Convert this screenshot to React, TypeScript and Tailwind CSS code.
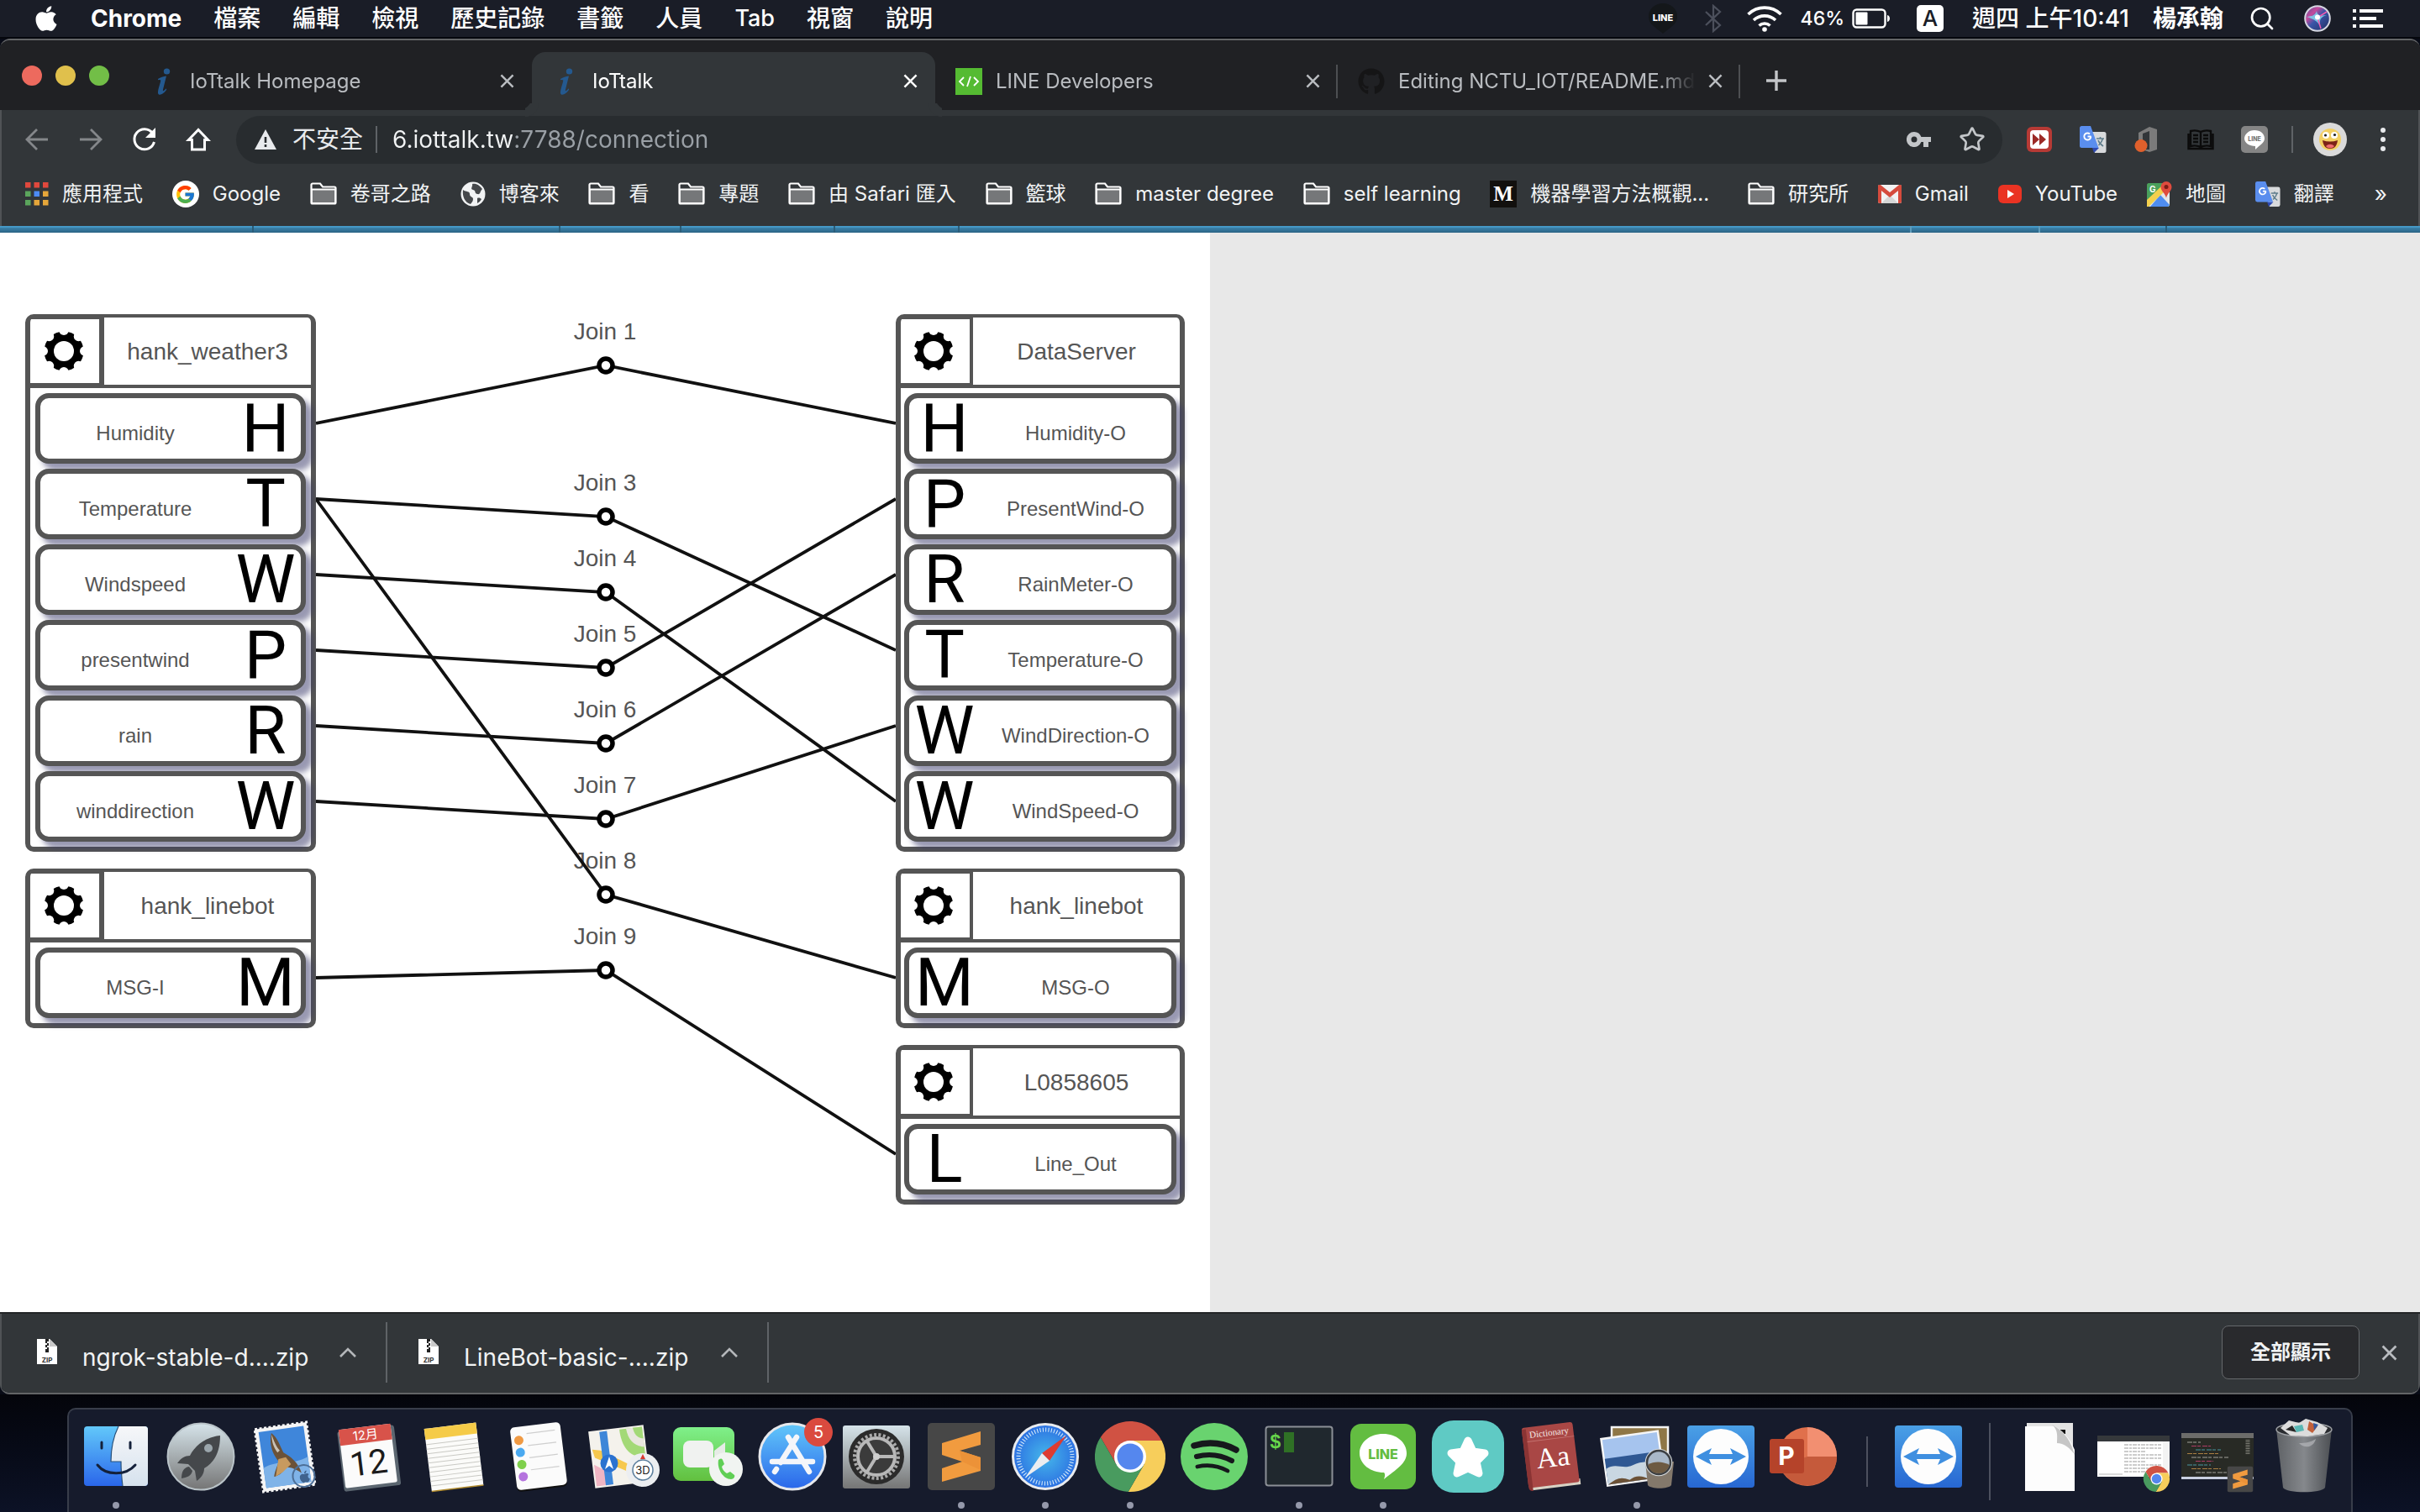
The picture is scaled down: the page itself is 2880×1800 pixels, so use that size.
import React from "react";
import { FaApple, FaGithub } from "react-icons/fa";
import { FcGoogle } from "react-icons/fc";
import { Search, Star } from "lucide-react";

/* ---------------------------------------------------------------- menu bar */

const MENUS = ["檔案", "編輯", "檢視", "歷史記錄", "書籤", "人員", "Tab", "視窗", "說明"];

function MenuBar() {
  return (
    <header className="flex h-[46px] items-center justify-between bg-[#1a1d27] pb-[2px] pl-[40px] pr-[44px] text-[28px] leading-[44px] text-white shadow-[inset_0_-2px_#05070d]">
      <nav className="flex items-center gap-[38px]">
        <button aria-label="Apple" className="w-[30px]">
          <FaApple className="h-[34px] w-[30px]" />
        </button>
        <button className="text-[28px] font-bold">Chrome</button>
        {MENUS.map((m) => (
          <button key={m} className={m === "Tab" ? "text-[27px] font-medium" : "font-medium"}>
            {m}
          </button>
        ))}
      </nav>
      <div className="flex items-center">
        <svg viewBox="0 0 40 44" className="mr-[28px] h-[44px] w-[40px]">
          <path d="M20 4a17 15 0 0 1 17 16c0 9-9 13-17 20-8-7-17-11-17-20A17 15 0 0 1 20 4z" fill="#14171a" />
          <text x="20" y="25" textAnchor="middle" fontSize="11" fontWeight="800" fill="#fff">LINE</text>
        </svg>
        <svg viewBox="0 0 24 34" className="mr-[28px] h-[34px] w-[24px]" fill="none" stroke="#4c505c" strokeWidth="2.200">
          <path d="M3 9l17 16-8 7V2l8 7L3 25" />
        </svg>
        <svg viewBox="0 0 42 32" className="mr-[22px] h-[32px] w-[42px]" fill="none" stroke="#fff" strokeWidth="3.600">
          <path d="M1.500 11a28 28 0 0 1 39 0M8 18a19 19 0 0 1 26 0M14.500 24.500a9.500 9.500 0 0 1 13 0" />
          <circle cx="21" cy="29" r="2.800" fill="#fff" stroke="none" />
        </svg>
        <span className="mr-[9px] text-[23px] font-medium">46%</span>
        <svg viewBox="0 0 46 24" className="mr-[31px] h-[24px] w-[46px]">
          <rect x="1.500" y="1.500" width="38" height="21" rx="4" fill="none" stroke="#fff" strokeWidth="2.400" />
          <rect x="4.500" y="4.500" width="14" height="15" rx="1" fill="#fff" />
          <path d="M42 8c4 1 4 7 0 8z" fill="#fff" />
        </svg>
        <span className="mr-[34px] flex h-[32px] w-[32px] items-center justify-center rounded-[5px] bg-white text-[26px] font-medium text-[#1a1d27]">
          A
        </span>
        <span className="mr-[28px] font-medium">週四 上午10:41</span>
        <span className="mr-[30px] font-bold">楊承翰</span>
        <button aria-label="Spotlight" className="mr-[34px]">
          <Search className="h-[32px] w-[32px]" strokeWidth={2} />
        </button>
        <button aria-label="Siri" className="mr-[26px]">
          <svg viewBox="0 0 32 32" className="h-[32px] w-[32px]">
            <defs>
              <linearGradient id="siri" x1="0" y1="0" x2="1" y2="1">
                <stop offset="0" stopColor="#4a4f9c" />
                <stop offset=".3" stopColor="#c54a9c" />
                <stop offset=".5" stopColor="#3a55a8" />
                <stop offset="1" stopColor="#1f2c5e" />
              </linearGradient>
            </defs>
            <circle cx="16" cy="16" r="14.800" fill="url(#siri)" stroke="#d5d7e2" strokeWidth="2" />
            <path d="M3 14c6-1 10-1 12-7 1 6 4 6 12 5-7 2-9 5-8 13-3-6-7-8-16-11z" fill="#7fd6ee" opacity=".85" />
            <path d="M16 15L27 8M16 15l4 13" stroke="#f05ab0" strokeWidth="1.500" />
            <circle cx="16" cy="14.500" r="3" fill="#fff" />
          </svg>
        </button>
        <svg viewBox="0 0 36 22" className="h-[22px] w-[36px]" fill="#fff">
          <path d="M0 0h4v4H0zM8 0h28v4H8zM0 9h4v4H0zM8 9h20v4H8zM0 18h4v4H0zM8 18h28v4H8z" />
        </svg>
      </div>
    </header>
  );
}

/* -------------------------------------------------------------------- tabs */

const Info = () => (
  <svg viewBox="0 0 32 32" className="h-[32px] w-[32px] shrink-0">
    <ellipse cx="20.500" cy="4" rx="3.700" ry="3.500" fill="#24598f" />
    <path d="M10 13c3-2 6-3 10-3.500l-4 16c-.5 2.500.5 2.500 3.500-1 .8.300.8 1 .3 1.700-2.500 4-9 8-9.800 3.500-.3-4 3-12 3.300-15-.5-1-2-.6-3.300-.4z" fill="#24598f" />
  </svg>
);

const LineDev = () => (
  <svg viewBox="0 0 32 32" className="h-[32px] w-[32px] shrink-0">
    <rect width="32" height="32" fill="#55bb32" />
    <path d="M10 11l-5 5 5 5M22 11l5 5-5 5M18 10l-4 12" fill="none" stroke="#fff" strokeWidth="1.800" />
  </svg>
);

const CloseIcon = ({ className }: { className: string }) => (
  <svg viewBox="0 0 18 18" className={className} fill="none" stroke="currentColor" strokeWidth="2.600">
    <path d="M1.500 1.500l15 15M16.500 1.500l-15 15" />
  </svg>
);

const TABS = [
  { title: "IoTtalk Homepage", icon: <Info />, active: false, sep: false },
  { title: "IoTtalk", icon: <Info />, active: true, sep: false },
  { title: "LINE Developers", icon: <LineDev />, active: false, sep: true },
  {
    title: "Editing NCTU_IOT/README.md",
    icon: <FaGithub className="h-[32px] w-[32px] shrink-0 text-[#151516]" />,
    active: false,
    sep: true,
  },
];

function TabStrip() {
  return (
    <div className="flex h-[83px] items-end bg-[#202124]">
      <div className="flex h-[83px] w-[154px] items-center gap-[16px] pl-[26px]">
        <button aria-label="Close window" className="h-[24px] w-[24px] rounded-full bg-[#ed6a5e]" />
        <button aria-label="Minimize" className="h-[24px] w-[24px] rounded-full bg-[#e0c04c]" />
        <button aria-label="Zoom" className="h-[24px] w-[24px] rounded-full bg-[#72be47]" />
      </div>
      <div role="tablist" className="flex">
        {TABS.map((t) => (
          <div
            key={t.title}
            className={
              t.active
                ? "relative flex h-[69px] w-[480px] items-center rounded-t-[16px] bg-[#323639] pl-[24px] pr-[14px] text-white before:absolute before:-left-[16px] before:bottom-0 before:h-[16px] before:w-[16px] before:rounded-br-[16px] before:shadow-[8px_8px_0_0_#323639] after:absolute after:-right-[16px] after:bottom-0 after:h-[16px] after:w-[16px] after:rounded-bl-[16px] after:shadow-[-8px_8px_0_0_#323639]"
                : "relative flex h-[69px] w-[479px] items-center pl-[24px] pr-[14px] text-[#b9bcc0]"
            }
          >
            {t.icon}
            <button
              role="tab"
              aria-selected={t.active}
              className="ml-[16px] flex-1 whitespace-nowrap text-left text-[24px] leading-[36px] [mask-image:linear-gradient(to_right,#000_86%,transparent_98%)]"
            >
              {t.title}
            </button>
            <button aria-label={`Close ${t.title}`} className="flex h-[32px] w-[32px] shrink-0 items-center justify-center">
              <CloseIcon className="h-[17px] w-[17px]" />
            </button>
            {t.sep && <span className="absolute right-0 top-[15px] h-[40px] w-[2px] bg-[#4d4f52]" />}
          </div>
        ))}
      </div>
      <button aria-label="New tab" className="mb-[23px] ml-[31px] text-[#c3c5c8]">
        <svg viewBox="0 0 24 24" className="h-[24px] w-[24px]" stroke="currentColor" strokeWidth="3.400">
          <path d="M12 0v24M0 12h24" />
        </svg>
      </button>
    </div>
  );
}

/* ----------------------------------------------------------------- toolbar */

const Translate = ({ className }: { className: string }) => (
  <svg viewBox="0 0 32 32" className={className}>
    <path d="M11 7h18a2.500 2.500 0 0 1 2.500 2.500v20A2.500 2.500 0 0 1 29 32H18z" fill="#d8dadc" />
    <path d="M17 32l6-6H15z" fill="#2f49b0" />
    <path d="M2.500 0H13l9.500 26h-20A2.500 2.500 0 0 1 0 23.500v-21A2.500 2.500 0 0 1 2.500 0z" fill="#5a8eee" />
    <path d="M13.500 12.500H9.500M13.300 12.500a4 4 0 1 1-1.300-3" fill="none" stroke="#fff" strokeWidth="1.900" />
    <path d="M20 15h9M24.500 13v2M27.500 15c-1 4-3 6-5 8M22 17c1 3 3 5 6 7" fill="none" stroke="#5f7d8c" strokeWidth="1.600" />
  </svg>
);

function Toolbar() {
  return (
    <div className="flex h-[70px] items-center bg-[#323639] pl-[28px] pr-[34px] shadow-[inset_2px_0_#505356,inset_-2px_0_#505356]">
      <div className="flex w-[253px] items-center gap-[32px]">
        <button aria-label="Back" className="text-[#84878a]">
          <svg viewBox="0 0 32 32" className="h-[32px] w-[32px]" fill="none" stroke="currentColor" strokeWidth="2.800">
            <path d="M29 16H4M16 4L4 16l12 12" />
          </svg>
        </button>
        <button aria-label="Forward" className="text-[#84878a]">
          <svg viewBox="0 0 32 32" className="h-[32px] w-[32px]" fill="none" stroke="currentColor" strokeWidth="2.800">
            <path d="M3 16h25M16 4l12 12-12 12" />
          </svg>
        </button>
        <button aria-label="Reload" className="text-white">
          <svg viewBox="0 0 32 32" className="h-[32px] w-[32px]">
            <path d="M25.500 8.500A12 12 0 1 0 27.500 19" fill="none" stroke="currentColor" strokeWidth="3" />
            <path d="M29 2v12H17z" fill="currentColor" />
          </svg>
        </button>
        <button aria-label="Home" className="text-white">
          <svg viewBox="0 0 32 32" className="h-[32px] w-[32px]" fill="none" stroke="currentColor" strokeWidth="3">
            <path d="M16 4.500L4.500 16.500H8.500V28h15V16.500h4z" />
          </svg>
        </button>
      </div>
      <div className="flex h-[57px] flex-1 items-center rounded-full bg-[#282c2f] pl-[22px] pr-[20px] text-[26px]">
        <svg viewBox="0 0 26 24" className="h-[24px] w-[26px]">
          <path d="M13 0l13 24H0z" fill="#e8eaed" />
          <path d="M11.700 9h2.600v7h-2.600zM11.700 18h2.600v3h-2.600z" fill="#282c2f" />
        </svg>
        <button className="ml-[19px] text-[28px] leading-[40px] text-[#e8eaed]">不安全</button>
        <span className="ml-[15px] h-[32px] w-[2px] bg-[#5f6367]" />
        <input
          aria-label="Address"
          defaultValue="6.iottalk.tw:7788/connection"
          className="ml-[18px] h-[44px] flex-1 bg-linear-to-r from-[#f1f3f4] from-[146px] to-[#9aa0a6] to-[146px] bg-clip-text text-[28px] text-transparent outline-none"
        />
        <button aria-label="Passwords">
          <svg viewBox="0 0 30 18" className="h-[18px] w-[30px]" fill="#c3c6c9">
            <path fillRule="evenodd" d="M9 0a9 9 0 0 1 8.400 6H29v6h-3v6h-6v-6h-2.600A9 9 0 1 1 9 0zm0 5.500a3.500 3.500 0 1 0 0 7 3.500 3.500 0 0 0 0-7z" />
          </svg>
        </button>
        <button aria-label="Bookmark this page" className="ml-[32px]">
          <Star className="h-[32px] w-[32px] text-[#c3c6c9]" strokeWidth={2} />
        </button>
      </div>
      <div className="ml-[28px] flex items-center gap-[32px]">
        <button aria-label="Fast forward extension">
          <svg viewBox="0 0 32 32" className="h-[32px] w-[32px]">
            <rect x="1" y="1" width="30" height="30" rx="6" fill="#b73a35" />
            <rect x="5" y="5" width="22" height="22" rx="4" fill="#fff" />
            <path d="M8 9l8 7-8 7zM16 9l8 7-8 7z" fill="#9c2a26" />
          </svg>
        </button>
        <button aria-label="Translate extension">
          <Translate className="h-[32px] w-[32px]" />
        </button>
        <button aria-label="Office extension">
          <svg viewBox="0 0 32 32" className="h-[32px] w-[32px]">
            <path d="M6 8L19 1l9 3v24l-9 3-9-3 9 0V6l-8 3v9H6z" fill="#7b7b7b" />
            <circle cx="9" cy="23.500" r="7.500" fill="#e0602c" />
          </svg>
        </button>
        <button aria-label="Reader extension">
          <svg viewBox="0 0 32 32" className="h-[32px] w-[32px]" fill="none" stroke="#0b0b0b" strokeWidth="2.400">
            <path d="M16 7c-4-2-8-2-12-1v18c4-1 8-1 12 1 4-2 8-2 12-1V6c-4-1-8-1-12 1zv18M1.500 9v18h29V9M7 11h6M7 15h6M7 19h6M19 11h6M19 15h6M19 19h6" />
          </svg>
        </button>
        <button aria-label="LINE extension">
          <svg viewBox="0 0 32 32" className="h-[32px] w-[32px]">
            <rect width="32" height="32" rx="5" fill="#858585" />
            <path d="M16 5c7 0 12 4 12 10 0 5-6 8-11 13v-4C10 24 4 20 4 15S9 5 16 5z" fill="#fff" />
            <text x="16" y="17.500" textAnchor="middle" fontSize="7" fontWeight="800" fill="#777">LINE</text>
          </svg>
        </button>
      </div>
      <span className="ml-[28px] h-[32px] w-[2px] bg-[#5f6367]" />
      <button aria-label="Profile" className="ml-[24px]">
        <svg viewBox="0 0 40 40" className="h-[40px] w-[40px]">
          <circle cx="20" cy="20" r="20" fill="#dadada" />
          <circle cx="20" cy="20" r="13" fill="#f3cf62" />
          <circle cx="15" cy="15" r="4" fill="#fff" />
          <circle cx="25" cy="15" r="4" fill="#fff" />
          <circle cx="14.500" cy="15" r="1.600" fill="#222" />
          <circle cx="25.500" cy="14.500" r="1.600" fill="#222" />
          <path d="M11 21c6 2 12 2 18 0-1 7-4 10-9 10s-8-3-9-10z" fill="#7c2318" />
          <path d="M15 28c3-3 7-3 10 0-2 3-8 3-10 0z" fill="#ee6a6f" />
        </svg>
      </button>
      <button aria-label="More" className="ml-[40px] flex flex-col gap-[5px] pr-[7px]">
        <span className="h-[6px] w-[6px] rounded-full bg-[#e8eaed]" />
        <span className="h-[6px] w-[6px] rounded-full bg-[#e8eaed]" />
        <span className="h-[6px] w-[6px] rounded-full bg-[#e8eaed]" />
      </button>
    </div>
  );
}

/* --------------------------------------------------------------- bookmarks */

const Apps = () => (
  <svg viewBox="0 0 28 28" className="h-[28px] w-[28px]">
    {["#e0483d", "#e0483d", "#e0483d", "#5ba55c", "#4c8bf5", "#e5a63a", "#5ba55c", "#e5a63a", "#e5a63a"].map((c, i) => (
      <rect key={i} x={(i % 3) * 10.500} y={Math.floor(i / 3) * 10.500} width="6.500" height="6.500" fill={c} />
    ))}
  </svg>
);

const Folder = () => (
  <svg viewBox="0 0 32 28" className="h-[28px] w-[32px]">
    <path d="M1.500 24V3A1.500 1.500 0 0 1 3 1.500h9l3 4h14A1.500 1.500 0 0 1 30.500 7v17A1.500 1.500 0 0 1 29 25.500H3A1.500 1.500 0 0 1 1.500 24z" fill="#323639" stroke="#fff" strokeWidth="2.200" />
    <path d="M2 8.500h28V25H2z" fill="#757779" stroke="#fff" strokeWidth="1.800" />
  </svg>
);

const Globe = () => (
  <svg viewBox="0 0 30 30" className="h-[30px] w-[30px]">
    <circle cx="15" cy="15" r="14.500" fill="#f1f3f4" />
    <path d="M3 10c4 3 8 1 8 5s4 3 4 6-2 4-3 6C5 25 2 18 3 10zM14 3c5-1 9 2 12 6-3 3-2 7-6 6s-1-4-5-5 0-4-1-7zM20 20c2-1 4 0 5 1-1 2-3 4-5 5z" fill="#45484b" />
  </svg>
);

const Medium = () => (
  <svg viewBox="0 0 32 32" className="h-[32px] w-[32px]">
    <rect width="32" height="32" fill="#12100e" />
    <text x="16" y="24" textAnchor="middle" fontSize="25" fontWeight="700" fontFamily="Liberation Serif" fill="#fff">M</text>
  </svg>
);

const Gmail = () => (
  <svg viewBox="0 0 28 22" className="h-[22px] w-[28px]">
    <rect width="28" height="22" rx="2" fill="#f2f2f2" />
    <path d="M4 22l10-10 10 10z" fill="#d6d6d6" />
    <path d="M0 2v18a2 2 0 0 0 2 2h2V7l10 8L24 7v15h2a2 2 0 0 0 2-2V2a2 2 0 0 0-3.500-1.500L14 9 3.500.5A2 2 0 0 0 0 2z" fill="#d54b3d" />
  </svg>
);

const YouTube = () => (
  <svg viewBox="0 0 28 22" className="h-[22px] w-[28px]">
    <rect width="28" height="22" rx="6" fill="#ea3323" />
    <path d="M11 6l8 5-8 5z" fill="#fff" />
  </svg>
);

const GMaps = () => (
  <svg viewBox="0 0 30 30" className="h-[30px] w-[30px]">
    <rect x="0" y="2" width="27" height="28" rx="3" fill="#4aa05c" />
    <path d="M0 27L27 4v23a3 3 0 0 1-3 3H3z" fill="#e3e5e7" />
    <path d="M4 30L16 16l11 12-2 2z" fill="#4f8df0" />
    <path d="M0 22L18 5l5 5L2 30H0z" fill="#f4d04d" />
    <path d="M0 5a3 3 0 0 1 3-3h17L0 20z" fill="#4aa05c" />
    <text x="3" y="13" fontSize="10" fontWeight="700" fill="#fff">G</text>
    <path d="M23 0a6.500 6.500 0 0 1 6.500 6.500c0 5-5 7-6.500 13-1.500-6-6.500-8-6.500-13A6.500 6.500 0 0 1 23 0z" fill="#df4b3e" />
    <circle cx="23" cy="6.500" r="2.500" fill="#7c1d17" />
  </svg>
);

const BOOKMARKS: { label: string; icon: React.ReactNode; truncated?: boolean }[] = [
  { label: "應用程式", icon: <Apps /> },
  {
    label: "Google",
    icon: (
      <span className="flex h-[32px] w-[32px] items-center justify-center rounded-full bg-white">
        <FcGoogle className="h-[25px] w-[25px]" />
      </span>
    ),
  },
  { label: "卷哥之路", icon: <Folder /> },
  { label: "博客來", icon: <Globe /> },
  { label: "看", icon: <Folder /> },
  { label: "專題", icon: <Folder /> },
  { label: "由 Safari 匯入", icon: <Folder /> },
  { label: "籃球", icon: <Folder /> },
  { label: "master degree", icon: <Folder /> },
  { label: "self learning", icon: <Folder /> },
  { label: "機器學習方法概觀...", icon: <Medium />, truncated: true },
  { label: "研究所", icon: <Folder /> },
  { label: "Gmail", icon: <Gmail /> },
  { label: "YouTube", icon: <YouTube /> },
  { label: "地圖", icon: <GMaps /> },
  { label: "翻譯", icon: <Translate className="h-[30px] w-[30px]" /> },
];

function BookmarkBar() {
  return (
    <div className="flex h-[68px] items-center justify-between bg-[#323639] pb-[8px] pl-[30px] pr-[39px] text-[24px] leading-[34px] text-[#f1f3f4] shadow-[inset_2px_0_#505356,inset_-2px_0_#505356]">
      <nav className="flex flex-1 items-center justify-between pr-[48px]">
        {BOOKMARKS.map((b) => (
          <a
            key={b.label}
            href="#bookmark"
            className={b.truncated ? "flex items-center gap-[16px] whitespace-nowrap pr-[11px]" : "flex items-center gap-[16px] whitespace-nowrap"}
          >
            {b.icon}
            {b.label}
          </a>
        ))}
      </nav>
      <button aria-label="More bookmarks" className="text-[26px]">»</button>
    </div>
  );
}

/* -------------------------------------------------------------- connection */

const Gear = () => (
  <svg viewBox="0 0 48 48" className="h-[48px] w-[48px]">
    <circle cx="24" cy="24" r="23.500" fill="#000" />
    {[0, 45, 90, 135, 180, 225, 270, 315].map((a) => (
      <g key={a} transform={`rotate(${a} 24 24)`}>
        <circle cx="24" cy="-.8" r="5.800" fill="#fff" />
      </g>
    ))}
    <circle cx="24" cy="24" r="12" fill="#fff" />
  </svg>
);

type Device = { name: string; features: string[]; letters: string[] };

function DeviceBox({ device, output }: { device: Device; output: boolean }) {
  return (
    <section className="rounded-[10px] border-[6px] border-t-[4px] border-[#555] bg-white pb-[6px]">
      <header className="flex h-[84px] border-b-[4px] border-[#555]">
        <button
          aria-label={`Settings for ${device.name}`}
          className={
            output
              ? "flex w-[86px] shrink-0 items-center justify-center border-y-2 border-r-[4px] border-[#555] pr-[4px]"
              : "flex w-[88px] shrink-0 items-center justify-center border-y-2 border-r-[6px] border-[#555] pr-[2px]"
          }
        >
          <Gear />
        </button>
        <h2 className="flex-1 text-center text-[28px] leading-[82px]">{device.name}</h2>
      </header>
      <ul className={output ? "flex flex-col gap-[6px] px-[4px] pt-[6px]" : "flex flex-col gap-[6px] px-[6px] pt-[6px]"}>
        {device.features.map((f, i) => (
          <li key={f}>
            <button
              className={
                output
                  ? "flex h-[84px] w-full flex-row-reverse items-center rounded-[16px] border-[6px] border-[#555] bg-white shadow-[8px_8px_6px_rgba(51,51,102,0.5)]"
                  : "flex h-[84px] w-full items-center rounded-[16px] border-[6px] border-[#555] bg-white shadow-[8px_8px_6px_rgba(51,51,102,0.5)]"
              }
            >
              <span className="flex-1 pt-[12px] text-center text-[24px] leading-[36px]">{f}</span>
              <span className="w-[84px] text-center font-['Roboto',sans-serif] text-[80px] leading-[72px] text-black">{device.letters[i]}</span>
            </button>
          </li>
        ))}
      </ul>
    </section>
  );
}

const INPUTS: Device[] = [
  {
    name: "hank_weather3",
    features: ["Humidity", "Temperature", "Windspeed", "presentwind", "rain", "winddirection"],
    letters: ["H", "T", "W", "P", "R", "W"],
  },
  { name: "hank_linebot", features: ["MSG-I"], letters: ["M"] },
];

const OUTPUTS: Device[] = [
  {
    name: "DataServer",
    features: ["Humidity-O", "PresentWind-O", "RainMeter-O", "Temperature-O", "WindDirection-O", "WindSpeed-O"],
    letters: ["H", "P", "R", "T", "W", "W"],
  },
  { name: "hank_linebot", features: ["MSG-O"], letters: ["M"] },
  { name: "L0858605", features: ["Line_Out"], letters: ["L"] },
];

/* Vertical positions of the line ends and of the join node, from the top of the first box. */
const JOINS = [
  { name: "Join 1", from: 130, at: 61, to: 130 },
  { name: "Join 3", from: 220, at: 241, to: 400 },
  { name: "Join 4", from: 310, at: 331, to: 580 },
  { name: "Join 5", from: 400, at: 421, to: 220 },
  { name: "Join 6", from: 490, at: 511, to: 310 },
  { name: "Join 7", from: 580, at: 601, to: 490 },
  { name: "Join 8", from: 220, at: 691, to: 790 },
  { name: "Join 9", from: 790, at: 781, to: 1000 },
];

function JoinCanvas() {
  return (
    <svg viewBox="0 0 690 1060" className="h-[1060px] w-[690px] shrink-0">
      {JOINS.map((j) => (
        <text key={j.name} x="344" y={j.at - 31} textAnchor="middle" fontSize="28" fill="#555">
          {j.name}
        </text>
      ))}
      {JOINS.map((j) => (
        <g key={j.name} fill="none" stroke="#111">
          <path d={`M0 ${j.from}L345 ${j.at}L690 ${j.to}`} strokeWidth="3.800" />
          <circle cx="345" cy={j.at} r="8" fill="#fff" stroke="#000" strokeWidth="5.500" />
        </g>
      ))}
    </svg>
  );
}

function ConnectionPage() {
  return (
    <main className="flex flex-1 font-['Liberation_Sans',sans-serif] text-[#555]">
      <div className="flex w-1/2 items-start bg-white pl-[30px] pt-[97px]">
        <div className="flex w-[346px] shrink-0 flex-col gap-[20px]">
          {INPUTS.map((d) => (
            <DeviceBox key={d.name} device={d} output={false} />
          ))}
        </div>
        <JoinCanvas />
        <div className="flex w-[344px] shrink-0 flex-col gap-[20px]">
          {OUTPUTS.map((d) => (
            <DeviceBox key={d.name} device={d} output />
          ))}
        </div>
      </div>
      <div className="flex-1 bg-[#e8e8e8]" />
    </main>
  );
}

/* --------------------------------------------------------------- downloads */

const Zip = () => (
  <svg viewBox="0 0 24 30" className="h-[30px] w-[24px]">
    <path d="M0 0h15l9 9v21H0z" fill="#fff" />
    <path d="M15 0v9h9z" fill="#c9c9c9" />
    <path d="M10 0h4v3h-2v2h2v3h-2v2h2v6h-4v-4h2v-2h-2V7h2V5h-2z" fill="#222" />
    <text x="12" y="27.500" textAnchor="middle" fontSize="8" fontWeight="700" fill="#333">ZIP</text>
  </svg>
);

function DownloadBar() {
  return (
    <footer className="flex h-[96px] items-center bg-[#323639] pr-[27px] text-[#f1f3f4] shadow-[inset_0_2px_#232527,inset_2px_0_#505356,inset_-2px_0_#505356]">
      {["ngrok-stable-d....zip", "LineBot-basic-....zip"].map((f) => (
        <div key={f} className="flex h-[72px] w-[454px] items-center border-r-2 border-[#5f6367] pl-[37px] first:w-[461px] first:pl-[44px]">
          <div className="mb-[2px]">
            <Zip />
          </div>
          <button className="ml-[30px] w-[276px] whitespace-nowrap pt-[12px] text-left text-[28px] leading-[40px]">{f}</button>
          <button aria-label={`Options for ${f}`} className="ml-[30px] text-[#b4b7ba]">
            <svg viewBox="0 0 20 12" className="h-[12px] w-[20px]" fill="none" stroke="currentColor" strokeWidth="2.600">
              <path d="M1 11l9-9 9 9" />
            </svg>
          </button>
        </div>
      ))}
      <button className="ml-auto h-[64px] w-[164px] rounded-[8px] border border-[#65686b] bg-[#292a2d] text-[24px] font-bold">全部顯示</button>
      <button aria-label="Close downloads" className="ml-[26px] text-[#b9bcc0]">
        <CloseIcon className="h-[19px] w-[19px]" />
      </button>
    </footer>
  );
}

/* -------------------------------------------------------------------- dock */

const Defs = () => (
  <defs>
    <linearGradient id="blue" x1="0" y1="0" x2="0" y2="1"><stop offset="0" stopColor="#62c8fa" /><stop offset="1" stopColor="#2a66ea" /></linearGradient>
    <linearGradient id="grey" x1="0" y1="0" x2="0" y2="1"><stop offset="0" stopColor="#d6e4ea" /><stop offset="1" stopColor="#757575" /></linearGradient>
    <linearGradient id="white" x1="0" y1="0" x2="0" y2="1"><stop offset="0" stopColor="#f6f7f9" /><stop offset="1" stopColor="#d6e2ee" /></linearGradient>
    <linearGradient id="green" x1="0" y1="0" x2="0" y2="1"><stop offset="0" stopColor="#7ff08a" /><stop offset="1" stopColor="#62c03f" /></linearGradient>
    <linearGradient id="tv" x1="0" y1="0" x2="0" y2="1"><stop offset="0" stopColor="#4aa0e6" /><stop offset="1" stopColor="#2767d2" /></linearGradient>
    <linearGradient id="bin" x1="0" y1="0" x2="1" y2="0"><stop offset="0" stopColor="#5f6266" /><stop offset=".5" stopColor="#85888c" /><stop offset="1" stopColor="#4c4f53" /></linearGradient>
    <radialGradient id="compass"><stop offset="0" stopColor="#45b7ea" /><stop offset="1" stopColor="#2c70e2" /></radialGradient>
  </defs>
);

const ChromeLogo = () => (
  <g>
    <path d="M14.800 27A42 42 0 0 1 87.500 31L50 31 33.500 59.500z" fill="#d05243" />
    <path d="M87.500 31A42 42 0 0 1 47.700 92L66.500 59.500 50 31z" fill="#f7ce5b" />
    <path d="M47.700 92A42 42 0 0 1 14.800 27L33.500 59.500h33z" fill="#499b5f" />
    <circle cx="50" cy="50" r="19" fill="#fff" />
    <circle cx="50" cy="50" r="15.500" fill="#5587ee" />
  </g>
);

const SublimeLogo = () => (
  <g>
    <rect x="10" y="10" width="80" height="80" rx="5" fill="#474747" />
    <path d="M27 34l46-14v16L48 43l25 8v16L27 80V64l24-8-24-8z" fill="#f19b3f" />
    <path d="M51 56l22 10V51l-25-8z" fill="#ec9238" />
  </g>
);

const TeamViewer = () => (
  <g>
    <rect x="10" y="13" width="80" height="74" rx="4" fill="url(#tv)" />
    <circle cx="50" cy="50" r="33" fill="#fdfdfd" />
    <path d="M20 50l19-10-3 7h28l-3-7 19 10-19 10 3-7H36l3 7z" fill="#3f8fe0" />
  </g>
);

const range = (n: number) => Array.from({ length: n }, (_, i) => i);

const DOCK: { name: string; running?: boolean; art: React.ReactNode }[] = [
  {
    name: "Finder",
    running: true,
    art: (
      <g>
        <rect x="12" y="14" width="76" height="71" rx="4" fill="url(#blue)" />
        <path d="M53 14h31a4 4 0 0 1 4 4v63a4 4 0 0 1-4 4H58c-1-8-2-17-2-29H44c0-16 3-30 9-42z" fill="url(#white)" />
        <path d="M53 14c-6 12-9 26-9 42h12c0 12 1 21 2 29" fill="none" stroke="#27517a" strokeWidth="1.200" />
        <path d="M33 33v7M67 33v7M28 60c10 13 34 13 45 0" fill="none" stroke="#14213a" strokeWidth="3" strokeLinecap="round" />
      </g>
    ),
  },
  {
    name: "Launchpad",
    art: (
      <g>
        <circle cx="50" cy="50" r="39.500" fill="url(#grey)" stroke="#b9c3c8" strokeWidth="2" />
        <path d="M73 25c-18 2-30 12-36 24-6 0-11 3-15 9l13 1 8 8 2 12c6-4 9-9 9-15 12-7 19-19 19-39z" fill="#45484b" />
        <circle cx="59" cy="40" r="5" fill="#9ba6ac" />
        <path d="M36 62c-7 1-9 7-9 14 6-1 12-3 13-9z" fill="#45484b" />
      </g>
    ),
  },
  {
    name: "Mail",
    art: (
      <g transform="rotate(-8 50 50)">
        <rect x="19" y="13" width="62" height="75" fill="#f5f5f5" stroke="#f5f5f5" strokeWidth="3" strokeDasharray="3 2.500" />
        <rect x="23" y="17" width="54" height="67" fill="#3f86da" />
        <path d="M23 60c18-8 34 2 54-6v30H23z" fill="#7fb3e8" />
        <path d="M38 20c7 7 8 17 11 25 7 5 16 14 18 27-6-5-12-9-17-9-5 5-10 9-16 9 2-7 5-11 8-17-6-10-9-22-4-35z" fill="#6b5238" />
        <path d="M38 22c2 8 3 14 7 20l-3 2c-4-7-5-14-4-22z" fill="#c9c3b8" />
        <path d="M42 52l9-1 5 9-11 8-9 4z" fill="#c79a5f" />
        <circle cx="69" cy="76" r="13" fill="none" stroke="#4d6f97" strokeWidth="2" />
        <FaApple x="62" y="69" width="14" height="14" color="#3f638e" />
      </g>
    ),
  },
  {
    name: "Calendar",
    art: (
      <g transform="rotate(-7 50 50)">
        <rect x="15" y="16" width="68" height="72" rx="3" fill="#5b6670" />
        <rect x="17" y="14" width="62" height="70" rx="2" fill="#fbfbfb" />
        <path d="M17 14h62v19H17z" fill="#d8534a" />
        <text x="48" y="29" textAnchor="middle" fontSize="15" fill="#fff">12月</text>
        <text x="48" y="71" textAnchor="middle" fontSize="40" fontFamily="Roboto" fill="#1b1b1b">12</text>
      </g>
    ),
  },
  {
    name: "Notes",
    art: (
      <g transform="rotate(-7 50 50)">
        <rect x="19" y="13" width="62" height="75" fill="#fbfbf9" />
        <rect x="19" y="13" width="62" height="13" fill="#f5cb48" />
        {range(10).map((i) => (
          <path key={i} d={`M19 ${32 + i * 5.500}h62`} stroke="#c9c9c4" strokeWidth="1" />
        ))}
        <path d="M19 88h62" stroke="#b08a2c" strokeWidth="1.500" />
      </g>
    ),
  },
  {
    name: "Reminders",
    art: (
      <g transform="rotate(-7 50 50)">
        <rect x="20" y="14" width="60" height="75" rx="5" fill="#101010" />
        <rect x="20" y="12" width="60" height="75" rx="5" fill="#fbfbfb" />
        {["#f09a43", "#4aa9f0", "#7fd04c", "#b573de"].map((c, i) => (
          <g key={c}>
            <circle cx="29" cy={28 + i * 14.500} r="5.500" fill={c} />
            <path d={`M39 ${21 + i * 14.500}h34`} stroke="#cfcfcf" strokeWidth="1.200" />
          </g>
        ))}
      </g>
    ),
  },
  {
    name: "Maps",
    art: (
      <g>
        <g transform="rotate(-7 46 50)">
          <rect x="13" y="16" width="66" height="68" fill="#f4f2ec" />
          <path d="M50 18h27v36c-18 0-27-14-27-36z" fill="#a3d977" />
          <path d="M58 18h19v24c-12-2-18-10-19-24z" fill="#e9e7df" />
          <path d="M66 18h11v14c-7-1-10-6-11-14z" fill="#a3d977" />
          <path d="M15 38l10 2 52 34v8l-60-34z" fill="#f6c84d" />
          <path d="M15 56l18 12v14H15z" fill="#efb5c3" />
          <path d="M26 18h9v64h-9z" fill="#3d86d8" />
        </g>
        <circle cx="34" cy="58" r="10.500" fill="#2b72d0" />
        <path d="M34 50l5 15-5-4-5 4z" fill="#fff" />
        <circle cx="74" cy="66" r="20" fill="#eceef1" />
        <circle cx="74" cy="66" r="12" fill="#fff" stroke="#5a7d9c" strokeWidth="1.500" />
        <path d="M74 47l3 6h-6z" fill="#d93a30" />
        <text x="74" y="71" textAnchor="middle" fontSize="13" fill="#222">3D</text>
      </g>
    ),
  },
  {
    name: "FaceTime",
    art: (
      <g>
        <rect x="9" y="15" width="73" height="64" rx="9" fill="url(#green)" />
        <rect x="21" y="31" width="36" height="32" rx="8" fill="#f0f2f0" />
        <path d="M58 43l13-10v28l-13-9z" fill="#e6ebe6" />
        <circle cx="72" cy="65" r="20" fill="#f1f4f1" />
        <path d="M63 54c2-2 4-2 5 0l2 5-3 3c1 4 3 6 6 8l4-2 5 4c1 2-1 5-4 5-9 0-17-12-15-23z" fill="#60cf55" />
      </g>
    ),
  },
  {
    name: "App Store",
    art: (
      <g>
        <circle cx="50" cy="50" r="39" fill="url(#blue)" stroke="#e6e8ec" strokeWidth="3" />
        <g stroke="#f4f6fa" strokeWidth="6.500" strokeLinecap="round">
          <path d="M45 27l25 41M55 27L36 57M26 56h48M29 68l2-3" />
        </g>
        <circle cx="81" cy="21" r="17" fill="#da4a3f" />
        <text x="81" y="28" textAnchor="middle" fontSize="20" fill="#fff">5</text>
      </g>
    ),
  },
  {
    name: "System Preferences",
    art: (
      <g>
        <rect x="10" y="13" width="80" height="75" rx="3" fill="url(#grey)" />
        <circle cx="50" cy="50" r="33" fill="#2b2b2b" />
        <circle cx="50" cy="50" r="26" fill="none" stroke="#a9a9a9" strokeWidth="4" strokeDasharray="3 2.400" />
        <circle cx="50" cy="50" r="22" fill="#3b3b3b" stroke="#b8b8b8" strokeWidth="4" />
        <path d="M50 50h21M50 50L39 32M50 50L39 68" stroke="#b8b8b8" strokeWidth="4" />
        <circle cx="50" cy="50" r="4" fill="#d0d0d0" />
      </g>
    ),
  },
  { name: "Sublime Text", running: true, art: <SublimeLogo /> },
  {
    name: "Safari",
    running: true,
    art: (
      <g>
        <circle cx="50" cy="50" r="38.500" fill="url(#compass)" stroke="#e9ebee" strokeWidth="3" />
        <circle cx="50" cy="50" r="32" fill="none" stroke="#dff0fb" strokeWidth="5" strokeDasharray="1 2.350" />
        <path d="M75 25L55 55l-9-9z" fill="#dd3b31" />
        <path d="M26 75l20-29 9 9z" fill="#eceef0" />
      </g>
    ),
  },
  { name: "Google Chrome", running: true, art: <ChromeLogo /> },
  {
    name: "Spotify",
    art: (
      <g>
        <circle cx="50" cy="50" r="40" fill="#69d36f" />
        <g fill="none" stroke="#16181c" strokeLinecap="round">
          <path d="M26 37c17-5 35-3 50 5" strokeWidth="7.500" />
          <path d="M29 50c15-4 29-2 42 5" strokeWidth="6" />
          <path d="M30 62c13-3 25-1 36 5" strokeWidth="4.800" />
        </g>
      </g>
    ),
  },
  {
    name: "iTerm",
    running: true,
    art: (
      <g>
        <rect x="10.500" y="14.500" width="79" height="70" rx="3" fill="#20282e" stroke="#8b8f96" strokeWidth="2" />
        <text x="15" y="40" fontSize="23" fontFamily="Liberation Mono" fontWeight="700" fill="#67d64b">$</text>
        <rect x="32" y="21" width="12" height="24" fill="#2f7025" />
      </g>
    ),
  },
  {
    name: "LINE",
    running: true,
    art: (
      <g>
        <rect x="11" y="11" width="78" height="78" rx="13" fill="#63bd41" />
        <path d="M50 23c16 0 28 10 28 23 0 12-12 19-27 31 1-3 2-6 0-8-16 0-29-10-29-23s12-23 28-23z" fill="#fff" />
        <text x="50" y="53" textAnchor="middle" fontSize="16" fontWeight="800" fill="#63bd41">LINE</text>
      </g>
    ),
  },
  {
    name: "Star",
    art: (
      <g>
        <rect x="7" y="7" width="86" height="86" rx="26" fill="#5fcac4" />
        <path d="M50 31l6 13 14 2-10 10 3 14-13-6-13 6 3-14-10-10 14-2z" fill="#fff" stroke="#fff" strokeWidth="9" strokeLinejoin="round" />
      </g>
    ),
  },
  {
    name: "Dictionary",
    art: (
      <g transform="rotate(-7 50 50)">
        <path d="M18 80h62v7H22z" fill="#d8d2c4" />
        <rect x="18" y="12" width="61" height="72" rx="3" fill="#a94745" />
        <path d="M18 14h5v74c-3 0-5-2-5-5z" fill="#8a3434" />
        <path d="M23 29h56" stroke="#c47370" strokeWidth="1" />
        <text x="50" y="25" textAnchor="middle" fontSize="11" fontFamily="Liberation Serif" fill="#f3e9e6">Dictionary</text>
        <text x="51" y="62" textAnchor="middle" fontSize="34" fontFamily="Liberation Serif" fill="#fff">Aa</text>
      </g>
    ),
  },
  {
    name: "Preview",
    running: true,
    art: (
      <g>
        <rect x="20" y="15" width="67" height="50" fill="#8f7747" stroke="#f3f3f3" strokeWidth="2.500" />
        <g transform="rotate(-8 46 52)">
          <rect x="11" y="24" width="68" height="56" fill="#a6c4ee" stroke="#f6f6f6" strokeWidth="2.500" />
          <path d="M12 48h66v31H12z" fill="#2f5893" />
          <path d="M12 60c12-6 20 4 32 0s20 0 34-2v21H12z" fill="#c9d7e2" />
          <path d="M12 79c10-6 16-8 26-2 8-6 18-2 22 2z" fill="#6b5136" />
        </g>
        <path d="M60 56h34l-3 28c-4 5-24 5-28 0z" fill="#83786b" />
        <circle cx="76" cy="57" r="15.500" fill="#a9b8c8" stroke="#d8dcdf" strokeWidth="1.500" />
        <circle cx="76" cy="57" r="14" fill="none" stroke="#3c3f42" strokeWidth="2.500" />
        <path d="M63 60c8-5 18-4 26 0-3 7-7 10-13 10s-11-3-13-10z" fill="#6d5a42" />
      </g>
    ),
  },
  { name: "TeamViewer", art: <TeamViewer /> },
  {
    name: "PowerPoint",
    art: (
      <g>
        <circle cx="52" cy="50" r="35" fill="#e0704c" />
        <path d="M52 15a35 35 0 0 1 35 35H52z" fill="#f28f71" />
        <path d="M87 50a35 35 0 0 1-68 11l33-11z" fill="#c55a3b" />
        <rect x="7" y="29" width="41" height="41" rx="3" fill="#b5432a" />
        <text x="27" y="60" textAnchor="middle" fontSize="30" fontWeight="700" fill="#fff">P</text>
      </g>
    ),
  },
];

const RECENT = [{ name: "TeamViewer recent", art: <TeamViewer /> }];

const STACK: { name: string; art: React.ReactNode }[] = [
  {
    name: "Document",
    art: (
      <g>
        <path d="M22 10h55v60H22z" fill="#e4e4e4" />
        <path d="M62 18h6v5h-6z" fill="#111" />
        <path d="M20 14h36c12 8 18 16 23 28v49H20z" fill="#fdfdfd" />
        <path d="M52 12c8 6 6 16 6 22 8 0 16 6 21 14-4-16-12-28-27-36z" fill="#c6c6c6" />
      </g>
    ),
  },
  {
    name: "Chrome window",
    art: (
      <g>
        <rect x="6" y="25" width="86" height="49" fill="#fff" />
        <rect x="6" y="25" width="86" height="7" fill="#35383b" />
        <path d="M84 32h8v42h-8z" fill="#f3f3f3" />
        {range(9).map((i) => (
          <path key={i} d={`M38 ${36 + i * 4}h${i % 3 === 2 ? 26 : 44}`} stroke="#9a9a9a" strokeWidth="1.200" strokeDasharray="5 1 3 1" />
        ))}
        <path d="M8 71h28" stroke="#b5b5b5" strokeWidth="1" />
        <g transform="translate(58 58) scale(.37)">
          <ChromeLogo />
        </g>
      </g>
    ),
  },
  {
    name: "Sublime window",
    art: (
      <g>
        <rect x="5" y="22" width="86" height="55" fill="#282a25" />
        <rect x="5" y="22" width="86" height="6" fill="#6c6c6a" />
        <rect x="5" y="74" width="86" height="3" fill="#c8cfe0" />
        {range(9).map((i) => (
          <path
            key={i}
            d={`M${12 + (i % 3) * 5} ${33 + i * 4.500}h${16 + ((i * 7) % 30)}`}
            stroke={["#c8c8c0", "#d9427a", "#55b9c9", "#d69a4c"][i % 4]}
            strokeWidth="1"
            strokeDasharray="6 1 4 2"
            opacity=".75"
          />
        ))}
        <path d="M84 30v18" stroke="#7c7c74" strokeWidth="5" strokeDasharray="1 1" />
        <g transform="translate(56 58) scale(.38)">
          <SublimeLogo />
        </g>
      </g>
    ),
  },
  {
    name: "Trash",
    art: (
      <g>
        <path d="M17 17l66 0-8 70c-4 7-46 7-50 0z" fill="url(#bin)" />
        <ellipse cx="50" cy="18" rx="33" ry="8" fill="#2a2c30" stroke="#9da0a4" strokeWidth="1.500" />
        <path d="M22 16l10-9 12 3 8-5 14 4 12 7-4 7-20 3-20-1z" fill="#dcdcdc" />
        <path d="M28 18l8-5 5 8z" fill="#262626" />
        <path d="M56 8l10 6-6 8-6-4z" fill="#c2603a" />
        <path d="M38 14l10-2 2 7-9 2z" fill="#58b7b4" />
        <path d="M61 10l6 2-5 7z" fill="#33599e" />
        <path d="M44 34c8 0 14-1 20-5-2 9-12 13-20 5z" fill="#b5b7ba" opacity=".7" />
      </g>
    ),
  },
];

function DockItem({ name, art, running }: { name: string; art: React.ReactNode; running?: boolean }) {
  return (
    <button aria-label={name} className="flex flex-1 flex-col items-center pt-[6px]">
      <svg viewBox="0 0 100 100" className="h-[100px] w-[100px]">
        {art}
      </svg>
      {running && <span className="mt-[4px] h-[8px] w-[8px] rounded-full bg-[#9599ab]" />}
    </button>
  );
}

function Dock() {
  return (
    <div className="flex h-[140px] items-end bg-linear-to-b from-[#04050b] to-[#0c1226] px-[80px]">
      <svg className="h-0 w-0">
        <Defs />
      </svg>
      <nav aria-label="Dock" className="flex h-[124px] flex-1 rounded-t-[10px] border-2 border-b-0 border-[#383d4a] bg-[#161b2c] px-[6px]">
        {DOCK.map((d) => (
          <DockItem key={d.name} {...d} />
        ))}
        <span className="mx-[22px] mt-[32px] h-[60px] w-[2px] bg-[#4c505e]" />
        {RECENT.map((d) => (
          <DockItem key={d.name} {...d} />
        ))}
        <span className="mx-[21px] mt-[16px] h-[92px] w-[2px] bg-[#4c505e]" />
        {STACK.map((d) => (
          <DockItem key={d.name} {...d} />
        ))}
      </nav>
    </div>
  );
}

/* --------------------------------------------------------------------- app */

/* Segment widths of the page's collapsed blue navigation bar. */
const NAV_WIDTHS = ["w-[302px]", "w-[365px]", "w-[144px]", "w-[183px]", "w-[148px]"];

export default function App() {
  return (
    <div className="flex min-h-screen flex-col bg-[#080b16] font-['Inter','Noto_Sans_CJK_TC',sans-serif]">
      <MenuBar />
      <div className="flex flex-1 flex-col overflow-hidden rounded-[12px] border-y-2 border-[#636567]">
        <TabStrip />
        <Toolbar />
        <BookmarkBar />
        <div className="flex h-[8px] bg-linear-to-b from-[#4598c6] from-25% via-[#3a80a8] via-30% to-[#2b6485]">
          {NAV_WIDTHS.map((w) => (
            <span key={w} className={`${w} border-r-2 border-[#2b5d79]`} />
          ))}
          <span className="flex-1 border-r-2 border-[#5f9dbd]" />
          <span className="w-[153px] border-r-2 border-[#5f9dbd]" />
          <span className="w-[151px] border-r-2 border-[#2b5d79]" />
          <span className="w-[301px]" />
        </div>
        <ConnectionPage />
        <DownloadBar />
      </div>
      <Dock />
    </div>
  );
}
